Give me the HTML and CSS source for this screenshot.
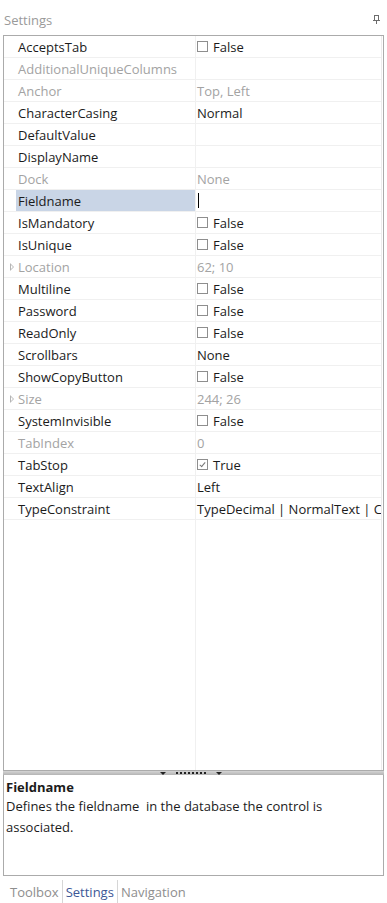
FILE: index.html
```html
<!DOCTYPE html>
<html lang="en">
  <head>
    <meta charset="UTF-8" />
    <meta name="viewport" content="width=device-width, initial-scale=1.0" />
    <title>Settings</title>
    <link rel="stylesheet" href="styles.css">
  </head>

  <body>
    <div class="panel">
      <div class="panel-header">
        <span class="panel-title">Settings</span>
        <svg class="pin" width="9" height="11" viewBox="0 0 9 11">
          <path d="M2 1h5M2.5 1v5M6.5 1v5M1 6h7M4.5 6v4" stroke="#6d6d6d" stroke-width="1" fill="none" shape-rendering="crispEdges" />
        </svg>
      </div>

      <div class="grid">
        <div class="rows">
          <div class="row"><span class="gutter"></span><span class="name">AcceptsTab</span><span class="value"><i class="check"></i>False</span></div>
          <div class="row disabled"><span class="gutter"></span><span class="name">AdditionalUniqueColumns</span><span class="value"></span></div>
          <div class="row disabled"><span class="gutter"></span><span class="name">Anchor</span><span class="value">Top, Left</span></div>
          <div class="row"><span class="gutter"></span><span class="name">CharacterCasing</span><span class="value">Normal</span></div>
          <div class="row"><span class="gutter"></span><span class="name">DefaultValue</span><span class="value"></span></div>
          <div class="row"><span class="gutter"></span><span class="name">DisplayName</span><span class="value"></span></div>
          <div class="row disabled"><span class="gutter"></span><span class="name">Dock</span><span class="value">None</span></div>
          <div class="row selected"><span class="gutter"></span><span class="name">Fieldname</span><span class="value"><i class="caret"></i></span></div>
          <div class="row"><span class="gutter"></span><span class="name">IsMandatory</span><span class="value"><i class="check"></i>False</span></div>
          <div class="row"><span class="gutter"></span><span class="name">IsUnique</span><span class="value"><i class="check"></i>False</span></div>
          <div class="row disabled"><span class="gutter"><i class="expander"></i></span><span class="name">Location</span><span class="value">62; 10</span></div>
          <div class="row"><span class="gutter"></span><span class="name">Multiline</span><span class="value"><i class="check"></i>False</span></div>
          <div class="row"><span class="gutter"></span><span class="name">Password</span><span class="value"><i class="check"></i>False</span></div>
          <div class="row"><span class="gutter"></span><span class="name">ReadOnly</span><span class="value"><i class="check"></i>False</span></div>
          <div class="row"><span class="gutter"></span><span class="name">Scrollbars</span><span class="value">None</span></div>
          <div class="row"><span class="gutter"></span><span class="name">ShowCopyButton</span><span class="value"><i class="check"></i>False</span></div>
          <div class="row disabled"><span class="gutter"><i class="expander"></i></span><span class="name">Size</span><span class="value">244; 26</span></div>
          <div class="row"><span class="gutter"></span><span class="name">SystemInvisible</span><span class="value"><i class="check"></i>False</span></div>
          <div class="row disabled"><span class="gutter"></span><span class="name">TabIndex</span><span class="value">0</span></div>
          <div class="row"><span class="gutter"></span><span class="name">TabStop</span><span class="value"><i class="check checked"></i>True</span></div>
          <div class="row"><span class="gutter"></span><span class="name">TextAlign</span><span class="value">Left</span></div>
          <div class="row"><span class="gutter"></span><span class="name">TypeConstraint</span><span class="value">TypeDecimal | NormalText | C</span></div>
          <div class="row filler"><span class="gutter"></span><span class="name"></span><span class="value"></span></div>
        </div>
      </div>

      <div class="splitter">
        <i class="grip-arrow"></i>
        <i class="grip-dots"></i>
        <i class="grip-arrow"></i>
      </div>

      <div class="description">
        <div class="desc-title">Fieldname</div>
        <div class="desc-text">Defines the fieldname&nbsp; in the database the control is associated.</div>
      </div>

      <div class="tabs">
        <span class="tab">Toolbox</span>
        <span class="tab active">Settings</span>
        <span class="tab">Navigation</span>
      </div>
    </div>
  </body>
</html>
```

FILE: styles.css
```css
body {
  margin: 0;
  background-color: white;
  font-family: "Open Sans", "Noto Sans", sans-serif;
  font-size: 13px;
  color: #1b1b1b;
}

.panel {
  width: 387px;
  height: 903px;
  display: flex;
  flex-direction: column;
}

.panel-header {
  height: 35px;
  display: flex;
  justify-content: space-between;
  align-items: flex-start;
  padding: 10px 6px 0 4px;
  box-sizing: border-box;
}
.panel-title {
  color: #9a9a9a;
  font-size: 13px;
  line-height: 20px;
}
.pin {
  margin-top: 4px;
}

.grid {
  flex: 1;
  margin: 0 3px;
  border: 1px solid #ababab;
  display: flex;
  min-height: 0;
}
.rows {
  flex: 1;
  display: flex;
  flex-direction: column;
  border-right: 1px solid #ececec;
  margin-right: 1px;
}
.row {
  height: 22px;
  display: grid;
  grid-template-columns: 12px 179px 1fr;
  border-bottom: 1px solid #f0f0f0;
  box-sizing: border-box;
  line-height: 22px;
  white-space: nowrap;
}
.row.filler {
  flex: 1;
  border-bottom: none;
}
.gutter {
  position: relative;
}
.name {
  padding-left: 2px;
  overflow: hidden;
}
.value {
  border-left: 1px solid #f0f0f0;
  padding-left: 1px;
  overflow: hidden;
  display: flex;
  align-items: center;
}
.row.disabled {
  color: #a3a3a3;
}
.row.selected .name {
  background-color: #c9d5e6;
}
.caret {
  width: 1px;
  height: 15px;
  margin-left: 1px;
  background-color: black;
}

.check {
  width: 11px;
  height: 11px;
  border: 1px solid #8e8e8e;
  box-sizing: border-box;
  margin-right: 5px;
  position: relative;
}
.check.checked::after {
  content: "";
  position: absolute;
  left: 3px;
  top: 1px;
  width: 2px;
  height: 5px;
  border: solid #777;
  border-width: 0 1px 1px 0;
  transform: rotate(40deg);
}

.expander {
  position: absolute;
  left: 6px;
  top: 7px;
  width: 0;
  height: 0;
  border-top: 4px solid transparent;
  border-bottom: 4px solid transparent;
  border-left: 4px solid #b5b5b5;
}
.expander::after {
  content: "";
  position: absolute;
  left: -3px;
  top: -2px;
  border-top: 2px solid transparent;
  border-bottom: 2px solid transparent;
  border-left: 2px solid white;
}

.splitter {
  height: 4px;
  margin: 0 3px;
  background: linear-gradient(#d4d4d4, #b4b4b4);
  display: flex;
  justify-content: center;
  align-items: center;
  gap: 10px;
  padding-right: 6px;
}
.grip-arrow {
  width: 0;
  height: 0;
  border-left: 3px solid transparent;
  border-right: 3px solid transparent;
  border-top: 3px solid #222;
}
.grip-dots {
  width: 30px;
  height: 2px;
  background: repeating-linear-gradient(90deg, #222 0 2px, transparent 2px 4px);
}

.description {
  height: 101px;
  margin: 0 3px;
  border: 1px solid #ababab;
  border-top: none;
  box-sizing: border-box;
  padding: 3px 6px 0 2px;
  font-size: 13px;
  line-height: 21px;
  color: #1b1b1b;
}
.desc-title {
  font-weight: bold;
  line-height: 18px;
}

.tabs {
  height: 27px;
  display: flex;
  align-items: stretch;
  padding: 4px 0 0 7px;
  box-sizing: border-box;
  font-size: 13px;
}
.tab {
  padding: 0 3px;
  line-height: 24px;
  color: #8e8e8e;
  border-left: 1px solid #d6d6d6;
}
.tab:first-child {
  border-left: none;
}
.tab.active {
  color: #3d5796;
}
```
